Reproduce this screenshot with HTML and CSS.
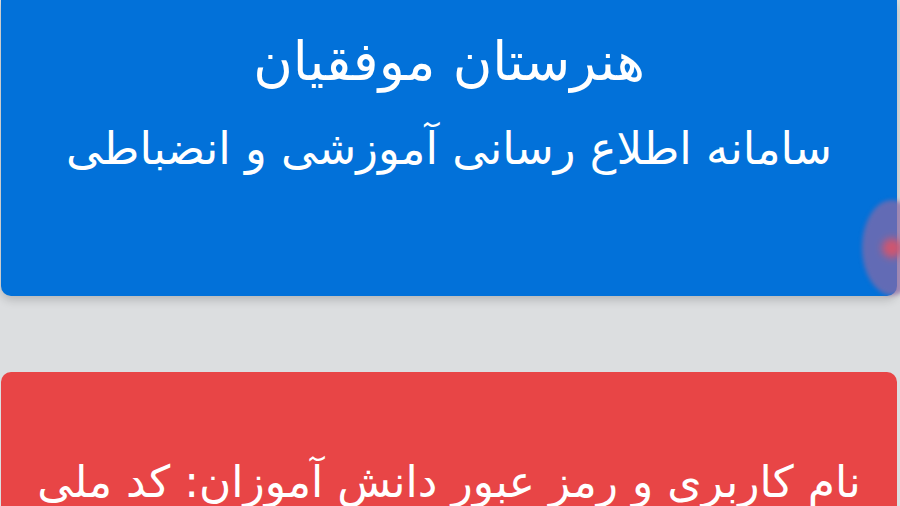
FILE: index.html
```html
<!DOCTYPE html>
<html lang="fa" dir="rtl">
<head>
<meta charset="utf-8">
<link rel="stylesheet" href="styles.css">
</head>
<body>
<div class="page">
  <header class="hero">
    <h1 class="title">هنرستان موفقیان</h1>
    <p class="subtitle">سامانه اطلاع رسانی آموزشی و انضباطی</p>
  </header>
  <section class="notice">
    <p class="notice-text">نام کاربری و رمز عبور دانش آموزان: کد ملی</p>
  </section>
  <div class="touch"><div class="touch-dot"></div></div>
</div>
</body>
</html>
```
FILE: styles.css
```css
html, body {
  margin: 0;
  padding: 0;
  background: #dcdee0;
  overflow: hidden;
}
.page {
  position: relative;
  width: 900px;
  height: 506px;
  display: flex;
  flex-direction: column;
  gap: 76px;
  padding: 0 3px 0 1px;
  box-sizing: border-box;
  font-family: "DejaVu Sans", sans-serif;
  color: #fff;
}
.hero {
  flex: 0 0 296px;
  background: #0271d9;
  border-radius: 0 0 10px 10px;
  box-shadow: 0 4px 10px rgba(0,0,0,0.18);
  display: flex;
  flex-direction: column;
  align-items: center;
  box-sizing: border-box;
}
.title {
  margin: 27px 0 0;
  font-size: 54px;
  font-weight: normal;
  line-height: 70px;
}
.subtitle {
  margin: 22px 0 0;
  font-size: 45px;
  line-height: 60px;
}
.notice {
  flex: 1;
  background: #e84546;
  border-radius: 10px 10px 0 0;
  display: flex;
  justify-content: center;
  padding-top: 80px;
  box-sizing: border-box;
}
.notice-text {
  margin: 0;
  font-size: 44px;
  line-height: 60px;
  white-space: nowrap;
}
.touch {
  position: absolute;
  left: 862px;
  top: 200px;
  width: 60px;
  height: 95px;
  border-radius: 50%;
  background: rgba(140, 105, 165, 0.7);
  filter: blur(2px);
  display: flex;
  align-items: center;
  justify-content: center;
}
.touch-dot {
  width: 20px;
  height: 20px;
  border-radius: 50%;
  background: #d0566f;
  filter: blur(3px);
}
```
